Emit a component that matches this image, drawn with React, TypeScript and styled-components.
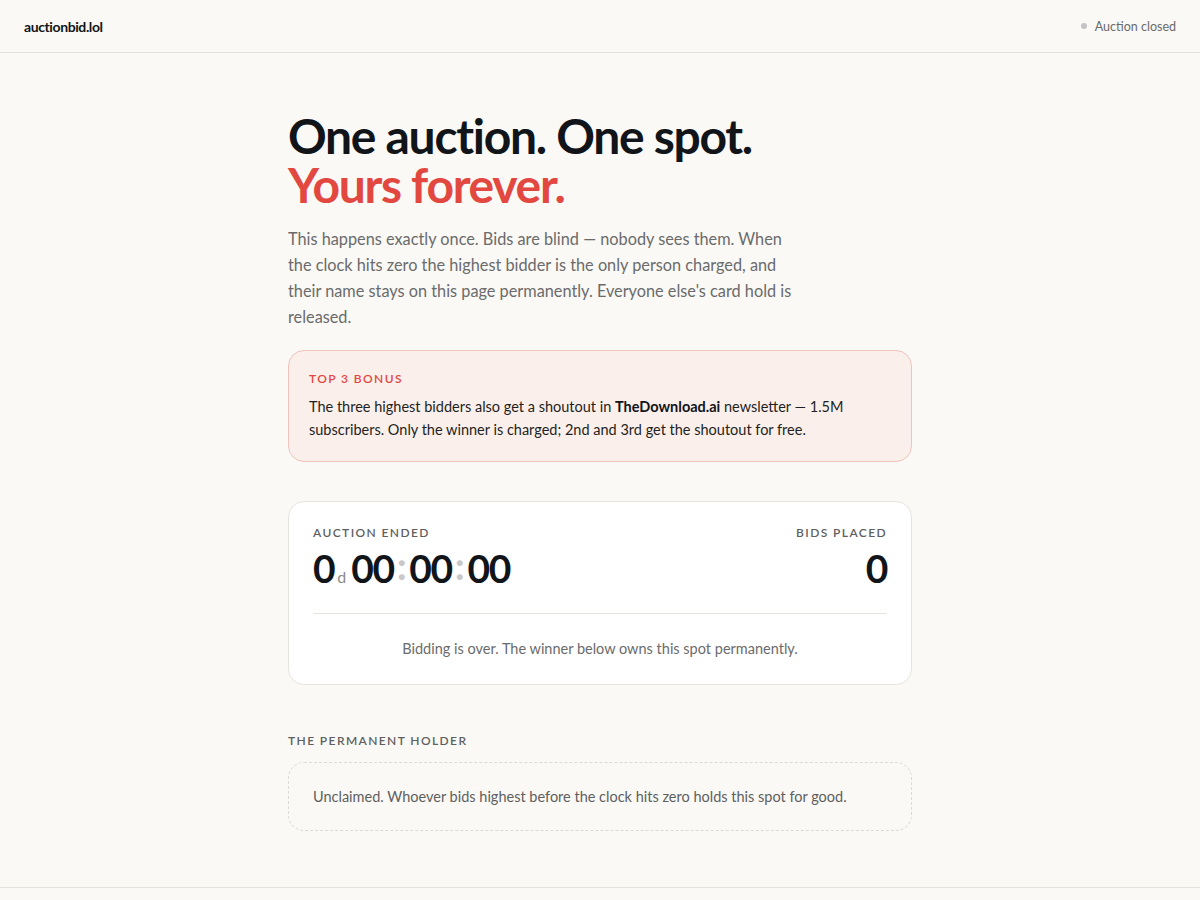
import styled, { createGlobalStyle } from "styled-components";

const GlobalStyle = createGlobalStyle`
  html, body {
    margin: 0;
    padding: 0;
    background: #faf9f6;
  }
  body {
    font-family: "Lato", "Noto Sans", sans-serif;
    color: #111418;
    -webkit-font-smoothing: antialiased;
  }
`;

const App = () => {
  return (
    <>
      <GlobalStyle />
      <Page>
        <TopBar>
          <Logo>auctionbid.lol</Logo>
          <Status>
            <Dot />
            Auction closed
          </Status>
        </TopBar>

        <Main>
          <Headline>
            One auction. One spot.
            <br />
            <Accent>Yours forever.</Accent>
          </Headline>
          <Intro>
            This happens exactly once. Bids are blind — nobody sees them. When
            the clock hits zero the highest bidder is the only person charged,
            and their name stays on this page permanently. Everyone else's card
            hold is released.
          </Intro>

          <BonusBox>
            <Label $tone="red">Top 3 bonus</Label>
            <BonusText>
              The three highest bidders also get a shoutout in{" "}
              <strong>TheDownload.ai</strong> newsletter — 1.5M subscribers.
              Only the winner is charged; 2nd and 3rd get the shoutout for free.
            </BonusText>
          </BonusBox>

          <TimerCard>
            <TimerRow>
              <div>
                <Label>Auction ended</Label>
                <Clock>
                  0<Unit>d</Unit>
                  00<Colon>:</Colon>00<Colon>:</Colon>00
                </Clock>
              </div>
              <BidsCol>
                <Label>Bids placed</Label>
                <Clock>0</Clock>
              </BidsCol>
            </TimerRow>
            <Divider />
            <TimerNote>
              Bidding is over. The winner below owns this spot permanently.
            </TimerNote>
          </TimerCard>

          <HolderSection>
            <Label>The permanent holder</Label>
            <HolderBox>
              Unclaimed. Whoever bids highest before the clock hits zero holds
              this spot for good.
            </HolderBox>
          </HolderSection>
        </Main>
        <Footer />
      </Page>
    </>
  );
};

export default App;

const Page = styled.div`
  min-height: 100vh;
  display: flex;
  flex-direction: column;
`;

const TopBar = styled.header`
  height: 53px;
  box-sizing: border-box;
  display: flex;
  align-items: center;
  justify-content: space-between;
  padding: 0 24px;
  border-bottom: 1px solid #e4e2dd;
`;

const Logo = styled.span`
  font-size: 14px;
  font-weight: 700;
  letter-spacing: -0.4px;
  color: #111418;
`;

const Status = styled.span`
  display: flex;
  align-items: center;
  gap: 8px;
  font-size: 12.5px;
  color: #6b6b6b;
`;

const Dot = styled.span`
  width: 6px;
  height: 6px;
  border-radius: 50%;
  background: #c4c4c4;
`;

const Main = styled.main`
  width: 624px;
  margin: 0 auto;
  padding: 58px 0 56px;
  display: flex;
  flex-direction: column;
`;

const Headline = styled.h1`
  margin: 0;
  font-size: 48px;
  line-height: 49px;
  font-weight: 700;
  letter-spacing: -1.3px;
  color: #111418;
`;

const Accent = styled.span`
  color: #e2483f;
`;

const Intro = styled.p`
  margin: 17px 0 20px;
  max-width: 510px;
  font-size: 16.3px;
  line-height: 26px;
  color: #6b6b6b;
`;

const BonusBox = styled.section`
  background: #fbefeb;
  border: 1px solid #f0c4bc;
  border-radius: 16px;
  padding: 20px 20px 20px;
`;

const Label = styled.div<{ $tone?: "red" }>`
  font-size: 12px;
  font-weight: 600;
  letter-spacing: 1.4px;
  text-transform: uppercase;
  color: ${(p) => (p.$tone === "red" ? "#e2483f" : "#5f5f5f")};
`;

const BonusText = styled.p`
  margin: 9px 0 0;
  font-size: 14.5px;
  line-height: 23px;
  color: #1d1f22;

  strong {
    font-weight: 700;
    color: #111418;
  }
`;

const TimerCard = styled.section`
  margin-top: 39px;
  background: #ffffff;
  border: 1px solid #e6e4df;
  border-radius: 16px;
  padding: 23px 24px 24px;
`;

const TimerRow = styled.div`
  display: flex;
  justify-content: space-between;
  align-items: flex-start;
`;

const BidsCol = styled.div`
  text-align: right;
`;

const Clock = styled.div`
  margin-top: 5px;
  font-size: 39px;
  line-height: 46px;
  font-weight: 700;
  letter-spacing: -1.4px;
  color: #111418;
`;

const Unit = styled.span`
  font-size: 16px;
  font-weight: 400;
  color: #8a8a8a;
  margin: 0 5px 0 3px;
  letter-spacing: 0;
`;

const Colon = styled.span`
  color: #c8c8c8;
  margin: 0 4px 0 3px;
  position: relative;
  top: -3px;
`;

const Divider = styled.hr`
  border: none;
  border-top: 1px solid #e6e4df;
  margin: 13px 0 24px;
`;

const TimerNote = styled.p`
  margin: 0;
  text-align: center;
  font-size: 14.5px;
  line-height: 22px;
  color: #6b6b6b;
`;

const HolderSection = styled.section`
  margin-top: 48px;
  display: flex;
  flex-direction: column;
  gap: 14px;
`;

const HolderBox = styled.div`
  border: 1px dashed #dcdad4;
  border-radius: 16px;
  padding: 23px 24px;
  font-size: 14.5px;
  line-height: 21px;
  color: #5f5f5f;
`;

const Footer = styled.footer`
  margin-top: auto;
  border-top: 1px solid #e4e2dd;
  height: 14px;
`;
